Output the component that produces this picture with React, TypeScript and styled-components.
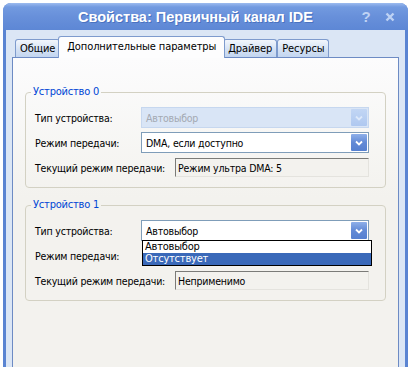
import React from "react";
import styled, { createGlobalStyle } from "styled-components";

const GlobalStyle = createGlobalStyle`
	html, body {
		margin: 0;
		padding: 0;
		background: #ffffff;
	}
	body {
		font-family: "DejaVu Sans", "Liberation Sans", sans-serif;
		font-stretch: condensed;
		font-size: 10.5px;
		letter-spacing: -0.2px;
		color: #000;
	}
`;

const Window = styled.div`
	margin: 3px 0 0 3px;
	width: 405px;
	height: 364px;
	background: #5a84d2;
	border-radius: 8px 8px 0 0;
	display: flex;
	flex-direction: column;
	overflow: hidden;
`;

const TitleBar = styled.div`
	height: 27px;
	flex: none;
	display: flex;
	align-items: center;
	padding: 0 6px 0 75px;
	background: linear-gradient(#9cbbef 0, #729ae0 4px, #6890da 50%, #5d87d5 100%);
`;

const Title = styled.div`
	flex: 1;
	color: #fff;
	font-family: "Liberation Sans", Arial, sans-serif;
	font-stretch: normal;
	letter-spacing: 0;
	font-size: 14.5px;
	font-weight: bold;
	text-shadow: 1px 1px 0 #4a72c0;
	white-space: nowrap;
`;

const TitleButton = styled.div`
	width: 24px;
	height: 20px;
	display: flex;
	align-items: center;
	justify-content: center;
	color: #bed2f4;
	font-family: "Liberation Sans", Arial, sans-serif;
	font-stretch: normal;
	font-size: 15px;
	font-weight: bold;
`;

const Body = styled.div`
	flex: 1;
	margin: 0 3px;
	background: #dbe6f5;
	padding: 6px 6px 0;
	display: flex;
	flex-direction: column;
`;

const TabStrip = styled.div`
	height: 21px;
	flex: none;
	display: flex;
	align-items: flex-end;
	padding-left: 3px;
	position: relative;
	z-index: 2;
`;

const Tab = styled.div<{ $active?: boolean }>`
	box-sizing: border-box;
	height: ${(p) => (p.$active ? "22px" : "18px")};
	margin: ${(p) => (p.$active ? "0 -2px -1px" : "0")};
	padding: ${(p) => (p.$active ? "0 8px 2px" : "0 4px")};
	border: 1px solid #7e9bcd;
	border-bottom: none;
	border-radius: 3px 3px 0 0;
	background: ${(p) =>
		p.$active ? "#fdfdfe" : "linear-gradient(#f2f6fc, #d2e0f4 60%, #c3d6f0)"};
	display: flex;
	align-items: center;
	position: relative;
	z-index: ${(p) => (p.$active ? 3 : 1)};
	white-space: nowrap;
	font-size: 11px;
	letter-spacing: -0.1px;
`;

const Page = styled.div`
	flex: 1;
	border: 1px solid #6d8bc4;
	border-bottom: none;
	background: linear-gradient(#fcfcfd, #f3f2ee 45%);
	padding: 27px 12px 0;
	position: relative;
	z-index: 1;
`;

const Group = styled.fieldset`
	margin: 0;
	min-width: 0;
	border: 1px solid #d3d1c3;
	border-radius: 4px;
	padding: 6px 13px 7px 9px;
	& + & {
		margin-top: 10px;
	}
`;

const Legend = styled.legend`
	color: #0046d5;
	padding: 0 2px;
	margin-left: -4px;
	line-height: 14px;
	font-size: 11px;
`;

const Row = styled.div`
	height: 25px;
	display: flex;
	align-items: center;
`;

const Label = styled.div<{ $width: number }>`
	width: ${(p) => p.$width}px;
	flex: none;
	white-space: nowrap;
`;

const Combo = styled.div<{ $disabled?: boolean }>`
	position: relative;
	box-sizing: border-box;
	width: 228px;
	height: 21px;
	padding: 1px;
	border: 1px solid ${(p) => (p.$disabled ? "#c6d7ef" : "#7f9db9")};
	background: ${(p) => (p.$disabled ? "#d9e5f6" : "#ffffff")};
	display: flex;
	align-items: stretch;
`;

const ComboText = styled.div<{ $disabled?: boolean }>`
	flex: 1;
	display: flex;
	align-items: center;
	padding-left: 3px;
	color: ${(p) => (p.$disabled ? "#a4a9b2" : "#000")};
`;

const ComboButton = styled.div<{ $disabled?: boolean }>`
	width: 16px;
	flex: none;
	display: flex;
	align-items: center;
	justify-content: center;
	border-radius: 1px;
	background: ${(p) =>
		p.$disabled
			? "linear-gradient(#c2d6f4, #afc8f0)"
			: "linear-gradient(#8eafe9, #628ad6 50%, #5680d0)"};
`;

const DropList = styled.div`
	position: absolute;
	top: 100%;
	left: 0;
	width: 230px;
	box-sizing: border-box;
	border: 1px solid #000;
	background: #fff;
	z-index: 5;
`;

const Option = styled.div<{ $selected?: boolean }>`
	height: 12px;
	line-height: 12px;
	padding-left: 2px;
	font-size: 11px;
	background: ${(p) => (p.$selected ? "#3a69b9" : "transparent")};
	color: ${(p) => (p.$selected ? "#fff" : "#000")};
`;

const TextBox = styled.div`
	box-sizing: border-box;
	width: 194px;
	height: 19px;
	border: 1px solid;
	border-color: #7b7b78 #e4e3de #e4e3de #7b7b78;
	background: #f3f2ee;
	padding-left: 2px;
	display: flex;
	align-items: center;
`;

function Chevron({ disabled }: { disabled?: boolean }) {
	return (
		<svg width="8" height="6" viewBox="0 0 8 6">
			<path
				d="M1 1.5 L4 4.5 L7 1.5"
				fill="none"
				stroke={disabled ? "#dce8fa" : "#ffffff"}
				strokeWidth="1.8"
			/>
		</svg>
	);
}

function ComboBox({
	value,
	disabled,
	options,
}: {
	value: string;
	disabled?: boolean;
	options?: { text: string; selected?: boolean }[];
}) {
	return (
		<Combo $disabled={disabled}>
			<ComboText $disabled={disabled}>{value}</ComboText>
			<ComboButton $disabled={disabled}>
				<Chevron disabled={disabled} />
			</ComboButton>
			{options && (
				<DropList>
					{options.map((o) => (
						<Option key={o.text} $selected={o.selected}>
							{o.text}
						</Option>
					))}
				</DropList>
			)}
		</Combo>
	);
}

export default function App() {
	return (
		<>
			<GlobalStyle />
			<Window>
				<TitleBar>
					<Title>Свойства: Первичный канал IDE</Title>
					<TitleButton>?</TitleButton>
					<TitleButton>
						<svg width="10" height="10" viewBox="0 0 10 10">
							<path d="M1.5 1.5 L8.5 8.5 M8.5 1.5 L1.5 8.5" stroke="#bed2f4" strokeWidth="2.4" />
						</svg>
					</TitleButton>
				</TitleBar>
				<Body>
					<TabStrip>
						<Tab>Общие</Tab>
						<Tab $active>Дополнительные параметры</Tab>
						<Tab>Драйвер</Tab>
						<Tab>Ресурсы</Tab>
					</TabStrip>
					<Page>
						<Group>
							<Legend>Устройство 0</Legend>
							<Row>
								<Label $width={106}>Тип устройства:</Label>
								<ComboBox value="Автовыбор" disabled />
							</Row>
							<Row>
								<Label $width={106}>Режим передачи:</Label>
								<ComboBox value="DMA, если доступно" />
							</Row>
							<Row>
								<Label $width={140}>Текущий режим передачи:</Label>
								<TextBox>Режим ультра DMA: 5</TextBox>
							</Row>
						</Group>
						<Group>
							<Legend>Устройство 1</Legend>
							<Row>
								<Label $width={106}>Тип устройства:</Label>
								<ComboBox
									value="Автовыбор"
									options={[
										{ text: "Автовыбор" },
										{ text: "Отсутствует", selected: true },
									]}
								/>
							</Row>
							<Row>
								<Label $width={106}>Режим передачи:</Label>
							</Row>
							<Row>
								<Label $width={140}>Текущий режим передачи:</Label>
								<TextBox>Неприменимо</TextBox>
							</Row>
						</Group>
					</Page>
				</Body>
			</Window>
		</>
	);
}
